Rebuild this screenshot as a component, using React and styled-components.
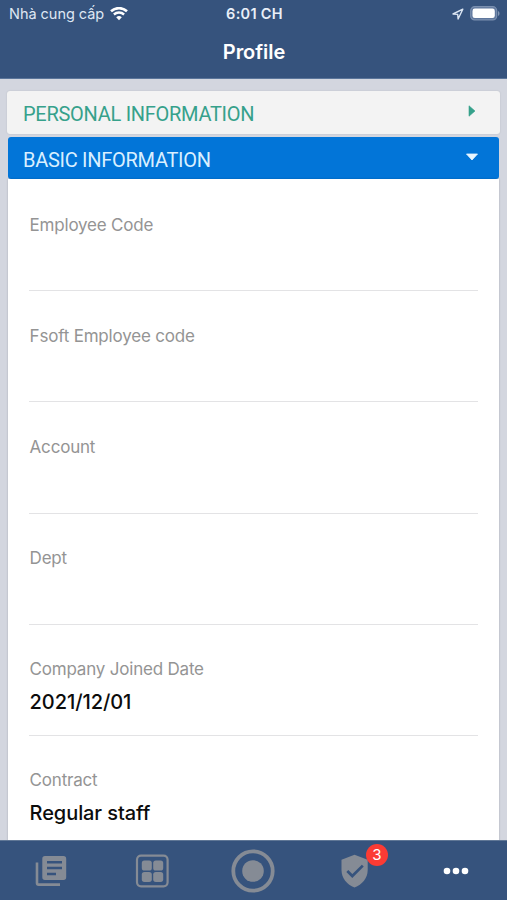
import React, { useState } from 'react';
import styled, { createGlobalStyle } from 'styled-components';

const GlobalStyle = createGlobalStyle`
  * {
    box-sizing: border-box;
  }

  body {
    margin: 0;
    overflow: hidden;
    font-family: Inter, 'Liberation Sans', sans-serif;
  }
`;

const Screen = styled.div`
  display: flex;
  flex-direction: column;
  height: 100vh;
  overflow: hidden;
  background: #d3d6df;
`;

const Header = styled.header`
  flex: none;
  height: 79px;
  background: #36537d;
  border-bottom: 1px solid #5b759a;
  color: #fff;
`;

const StatusBar = styled.div`
  display: grid;
  grid-template-columns: 1fr auto 1fr;
  align-items: center;
  height: 27px;
  padding: 0 7px 0 9px;
`;

const Carrier = styled.div`
  display: flex;
  align-items: center;
  gap: 6px;
  font-size: 14.5px;
  line-height: 20px;
  letter-spacing: -0.03px;
  color: #dfe7f3;
`;

const Clock = styled.div`
  font-size: 14.5px;
  font-weight: 600;
  letter-spacing: 0.3px;
  color: #e9eff8;
`;

const StatusIcons = styled.div`
  display: flex;
  align-items: center;
  justify-content: flex-end;
  gap: 6px;
`;

const Title = styled.h1`
  margin: 0;
  padding-left: 1px;
  font-size: 20px;
  font-weight: 600;
  line-height: 51px;
  letter-spacing: -0.05px;
  text-align: center;
`;

const Content = styled.main`
  flex: 1;
  min-height: 0;
  overflow: hidden;
  padding: 12px 7px 0;
`;

const SectionHeader = styled.button`
  display: flex;
  align-items: center;
  justify-content: space-between;
  width: ${props => (props.$open ? '491px' : '493px')};
  height: ${props => (props.$open ? '42px' : '43px')};
  margin: ${props => (props.$open ? '3px auto 0' : '0 auto')};
  padding: ${props => (props.$open ? '3px 20px 0 15px' : '2px 24px 0 16px')};
  border: none;
  border-radius: 3px;
  background: ${props => (props.$open ? '#0275d8' : '#f3f3f3')};
  box-shadow: ${props => (props.$open ? 'none' : '0 0 2px rgba(0, 0, 0, 0.12)')};
  color: ${props => (props.$open ? '#d9efff' : '#36a18b')};
  font-family: Roboto, sans-serif;
  font-size: 20px;
  letter-spacing: -0.28px;
  text-align: left;

  svg {
    margin-top: -6px;
  }
`;

const FieldList = styled.div`
  width: 491px;
  margin: 0 auto;
  padding: 1px 21px 0;
  background: #fff;
  box-shadow: 0 0 2px rgba(0, 0, 0, 0.2);
`;

const Field = styled.div`
  height: 111.2px;
  padding: 32.5px 0 0 0.6px;
  border-bottom: 1.5px solid #e3e3e5;
`;

const Label = styled.div`
  font-size: 17px;
  line-height: 24px;
  letter-spacing: -0.2px;
  color: #949494;
`;

const Value = styled.div`
  margin-top: 7px;
  font-size: 20px;
  font-weight: 500;
  line-height: 28px;
  letter-spacing: -0.08px;
  color: #0c0c0c;
`;

const TabBar = styled.nav`
  flex: none;
  display: grid;
  grid-template-columns: repeat(5, 1fr);
  height: 60px;
  border-top: 1px solid #607796;
  background: #36537d;
`;

const Tab = styled.button`
  display: flex;
  align-items: center;
  justify-content: center;
  padding: 0;
  border: none;
  background: none;
  color: ${props => (props.$active ? '#fff' : '#858b95')};
`;

const IconHolder = styled.span`
  position: relative;
  display: flex;
`;

const Badge = styled.span`
  position: absolute;
  top: -10px;
  left: 25px;
  width: 22px;
  height: 22px;
  border-radius: 50%;
  background: #fb3b34;
  color: #fff;
  font-family: Inter, sans-serif;
  font-size: 15px;
  line-height: 22px;
  text-align: center;
`;

const WifiIcon = () => (
  <svg width="18" height="14" viewBox="0 0 18 14" fill="none" stroke="#fff">
    <path d="M1 4.3a11.7 11.7 0 0 1 16 0" strokeWidth="2.6" />
    <path d="M3.9 7.5a7.6 7.6 0 0 1 10.2 0" strokeWidth="2.4" />
    <path d="M9 13.2 6.2 10.300a4.200 4.200 0 0 1 5.600 0z" fill="#fff" stroke="none" />
  </svg>
);

const LocationIcon = () => (
  <svg width="12" height="12" viewBox="0 0 12 12" fill="none" stroke="#dbe5f2">
    <path d="M10.8 1.2 1 6l4.7.4.4 4.6z" strokeWidth="1.4" strokeLinejoin="round" />
  </svg>
);

const BatteryIcon = () => (
  <svg width="30" height="15" viewBox="0 0 30 15">
    <rect x="0.7" y="0.7" width="26" height="13.2" rx="4" fill="#5f779d" stroke="#7b90b0" strokeWidth="1.2" />
    <rect x="2.5" y="2.6" width="22.3" height="9.4" rx="2.3" fill="#fff" />
    <path d="M28 5c2 .8 2 4.200 0 5z" fill="#8396b3" />
  </svg>
);

const CaretIcon = ({ open }) =>
  open ? (
    <svg width="14" height="8" viewBox="0 0 14 8" fill="#e8f6ff">
      <path d="M1.500 1h11L7 7z" stroke="#e8f6ff" strokeWidth="0.8" strokeLinejoin="round" />
    </svg>
  ) : (
    <svg width="8" height="12" viewBox="0 0 8 12" fill="#36a18b">
      <path d="M1 .8v10.400L7 6z" stroke="#36a18b" strokeWidth="0.6" strokeLinejoin="round" />
    </svg>
  );

const NewsIcon = () => (
  <svg width="32" height="32" viewBox="0 0 32 32">
    <path d="M2 7.5V28a1.6 1.6 0 0 0 1.6 1.6H25" fill="none" stroke="currentColor" strokeWidth="2.6" />
    <path
      fillRule="evenodd"
      fill="currentColor"
      d="M10 1h18.5A2.7 2.7 0 0 1 31.2 3.7v18.6a2.7 2.7 0 0 1-2.700 2.700H10a2.700 2.700 0 0 1-2.700-2.700V3.700A2.700 2.700 0 0 1 10 1zM12 6v2.500h15V6zm0 5.800v2.500h15v-2.500zm0 5.900v2.500h9v-2.500z"
    />
  </svg>
);

const GridIcon = () => (
  <svg width="34" height="34" viewBox="0 0 34 34" fill="currentColor">
    <rect x="2" y="1.7" width="30.6" height="30.6" rx="4" fill="none" stroke="currentColor" strokeWidth="2.2" />
    <rect x="6.8" y="6.5" width="10" height="10" rx="2.6" />
    <rect x="18.2" y="6.5" width="10" height="10" rx="2.6" />
    <rect x="6.8" y="17.9" width="10" height="10" rx="2.6" />
    <rect x="18.2" y="17.9" width="10" height="10" rx="2.6" />
  </svg>
);

const RecordIcon = () => (
  <svg width="44" height="44" viewBox="0 0 44 44">
    <circle cx="22" cy="22" r="19.7" fill="none" stroke="currentColor" strokeWidth="3.8" />
    <circle cx="22" cy="22" r="10.8" fill="currentColor" />
  </svg>
);

const ShieldIcon = () => (
  <svg width="28" height="34" viewBox="0 0 28 34">
    <path
      d="M13.500.800 26.700 5.800V16c0 8-5.500 14.700-13.200 17.400C5.800 30.700.5 24 .5 16V5.800z"
      fill="currentColor"
    />
    <path d="m6.300 17 5 5L21.800 11.600" fill="none" stroke="#36537d" strokeWidth="2.700" />
  </svg>
);

const MoreIcon = () => (
  <svg width="26" height="8" viewBox="0 0 26 8" fill="currentColor">
    <circle cx="4" cy="4" r="3.3" />
    <circle cx="13" cy="4" r="3.3" />
    <circle cx="22" cy="4" r="3.3" />
  </svg>
);

const fields = [
  { label: 'Employee Code', value: '' },
  { label: 'Fsoft Employee code', value: '' },
  { label: 'Account', value: '' },
  { label: 'Dept', value: '' },
  { label: 'Company Joined Date', value: '2021/12/01' },
  { label: 'Contract', value: 'Regular staff' },
];

const tabs = [
  { id: 'news', icon: <NewsIcon /> },
  { id: 'apps', icon: <GridIcon /> },
  { id: 'record', icon: <RecordIcon /> },
  { id: 'approval', icon: <ShieldIcon />, badge: 3 },
  { id: 'more', icon: <MoreIcon /> },
];

function App() {
  const [activeTab, setActiveTab] = useState('more');

  return (
    <Screen>
      <GlobalStyle />
      <Header>
        <StatusBar>
          <Carrier>
            Nhà cung cấp <WifiIcon />
          </Carrier>
          <Clock>6:01 CH</Clock>
          <StatusIcons>
            <LocationIcon />
            <BatteryIcon />
          </StatusIcons>
        </StatusBar>
        <Title>Profile</Title>
      </Header>

      <Content>
        <SectionHeader>
          PERSONAL INFORMATION
          <CaretIcon />
        </SectionHeader>
        <SectionHeader $open>
          BASIC INFORMATION
          <CaretIcon open />
        </SectionHeader>
        <FieldList>
          {fields.map(field => (
            <Field key={field.label}>
              <Label>{field.label}</Label>
              {field.value && <Value>{field.value}</Value>}
            </Field>
          ))}
        </FieldList>
      </Content>

      <TabBar>
        {tabs.map(tab => (
          <Tab key={tab.id} $active={tab.id === activeTab} onClick={() => setActiveTab(tab.id)}>
            <IconHolder>
              {tab.icon}
              {tab.badge && <Badge>{tab.badge}</Badge>}
            </IconHolder>
          </Tab>
        ))}
      </TabBar>
    </Screen>
  );
}

export default App;
